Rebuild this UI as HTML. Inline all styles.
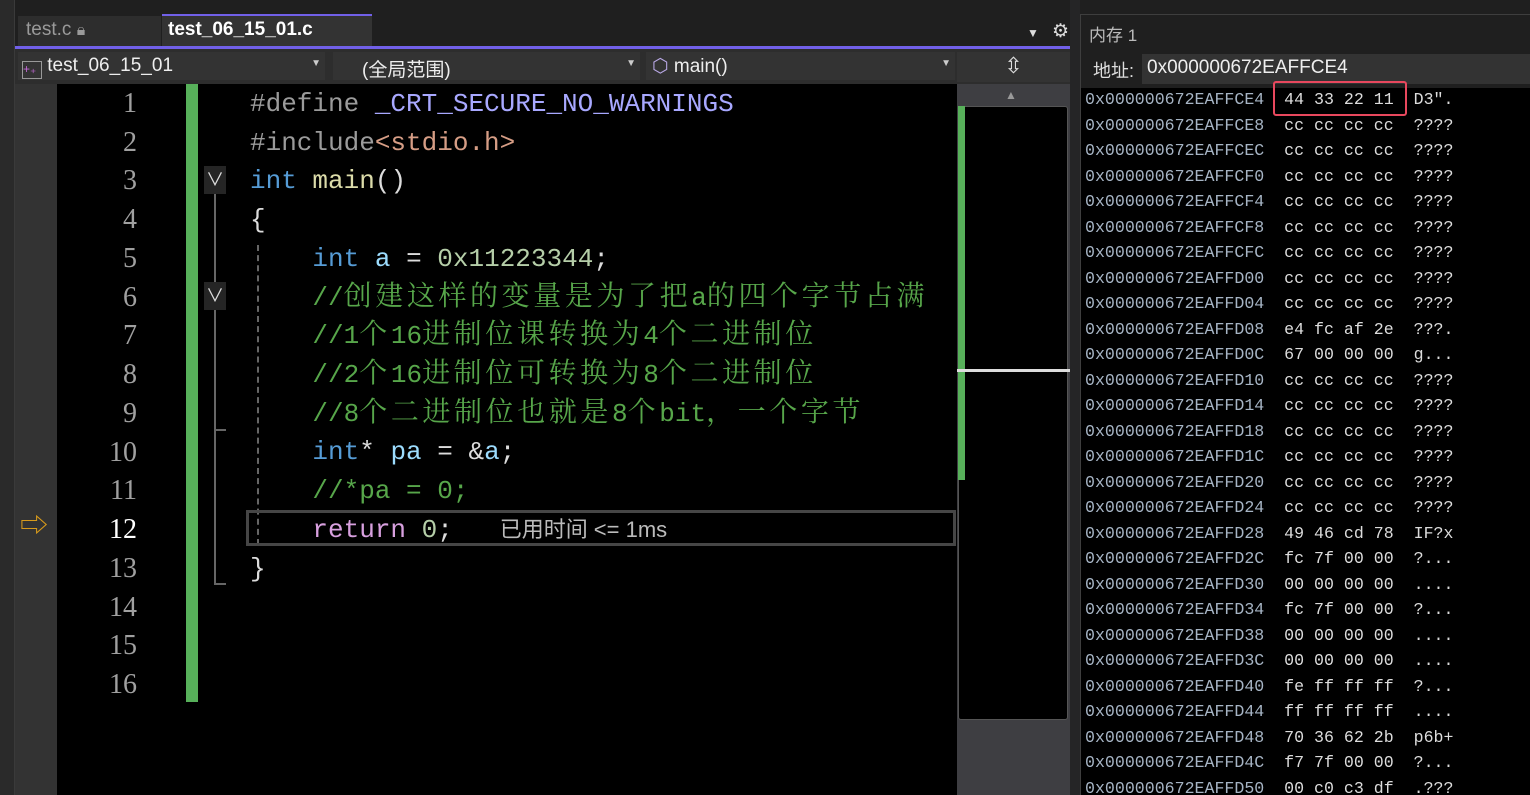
<!DOCTYPE html>
<html><head><meta charset="utf-8"><style>
*{margin:0;padding:0;box-sizing:border-box}
html,body{overflow:hidden}
body{width:1530px;height:795px;background:#1f1f1f;position:relative;overflow:hidden;font-family:"Liberation Sans","Noto Sans CJK SC",sans-serif}
.a{position:absolute}
.code{font-family:"Liberation Mono","Noto Serif CJK SC",monospace;font-size:26px;white-space:normal}
.code div{height:38.73px;line-height:38.73px;white-space:pre}
.c{font-family:"Noto Serif CJK SC",serif;font-size:28px;letter-spacing:3.6px;line-height:20px}
.ln{font-family:"Liberation Serif",serif;font-size:28px;color:#a0a0a0;text-align:right;width:80px;line-height:38.73px}
.mem{font-family:"Liberation Mono",monospace;font-size:16.6px;line-height:25.5px;white-space:pre;color:#dcdcdc}
.mem b{font-weight:normal;color:#a6b4c4}
.kw{color:#569cd6}.fn{color:#dcdcaa}.cm{color:#57a64a}.num{color:#b5cea8}.pp{color:#9b9b9b}.mac{color:#a8a8ff}.var{color:#9cdcfe}.str{color:#d69d85}.ret{color:#d8a0df}.w{color:#dcdcdc}
</style></head><body>
<div class="a" style="left:0;top:0;width:15px;height:795px;background:#2a2a2a;border-right:1px solid #3a3a3a"></div>
<div class="a" style="left:18px;top:16px;width:143px;height:30px;background:#2d2d2d;color:#9a9a9a;font-size:19px;padding:3px 8px">test.c <span style="font-size:16px">🔒︎</span></div>
<div class="a" style="left:162px;top:14px;width:210px;height:32px;background:#333;border-top:2px solid #7160e8;color:#fff;font-weight:bold;font-size:19px;padding:3px 6px">test_06_15_01.c <span style="font-weight:normal;color:#ccc;font-size:15px;margin-left:8px">⊣</span><span style="font-weight:normal;color:#ddd;margin-left:10px;font-size:22px">✕</span></div>
<div class="a" style="left:15px;top:46px;width:1055px;height:3px;background:#7160e8"></div>
<div class="a" style="left:1027px;top:26px;color:#ddd;font-size:12px">▼</div>
<div class="a" style="left:1052px;top:20px;color:#ddd;font-size:19px">⚙</div>
<div class="a" style="left:15px;top:49px;width:1055px;height:35px;background:#2d2d2d"></div>
<div class="a" style="left:18px;top:52px;width:307px;height:28px;background:#333;color:#eee;font-size:19px;padding:3px 4px"><span style="display:inline-block;width:20px;height:18px;border:1px solid #999;color:#c56ad9;font-size:12px;vertical-align:-2px;line-height:14px">+₊</span> test_06_15_01<span style="position:absolute;right:4px;top:6px;font-size:10px;color:#ccc">▼</span></div>
<div class="a" style="left:333px;top:52px;width:307px;height:28px;background:#333;color:#eee;font-size:19px;padding:3px 29px">(全局范围)<span style="position:absolute;right:4px;top:6px;font-size:10px;color:#ccc">▼</span></div>
<div class="a" style="left:646px;top:52px;width:309px;height:28px;background:#333;color:#eee;font-size:19px;padding:3px 6px"><span style="color:#b9a8e6">⬡</span> main()<span style="position:absolute;right:4px;top:6px;font-size:10px;color:#ccc">▼</span></div>
<div class="a" style="left:957px;top:52px;width:113px;height:30px;background:#333;color:#ddd;font-size:22px;text-align:center;line-height:28px">⇳</div>
<div class="a" style="left:15px;top:84px;width:42px;height:711px;background:#333"></div>
<div class="a" style="left:57px;top:84px;width:900px;height:711px;background:#000"></div>
<div class="a" style="left:186px;top:84px;width:12px;height:618px;background:#57b05a"></div>
<div class="a" style="left:20px;top:512px;color:#d89b1c;font-size:28px;line-height:28px">⇨</div>
<div class="a ln" style="left:57px;top:85px">1<br>2<br>3<br>4<br>5<br>6<br>7<br>8<br>9<br>10<br>11<br><span style="color:#fff">12</span><br>13<br>14<br>15<br>16</div>
<div class="a" style="left:204px;top:166px;width:22px;height:28px;background:#252525;color:#ddd;font-size:18px;text-align:center">∨</div>
<div class="a" style="left:204px;top:282px;width:22px;height:28px;background:#252525;color:#ddd;font-size:18px;text-align:center">∨</div>
<div class="a" style="left:214px;top:194px;width:2px;height:88px;background:#666"></div>
<div class="a" style="left:214px;top:310px;width:2px;height:120px;background:#666"></div>
<div class="a" style="left:214px;top:429px;width:12px;height:2px;background:#666"></div>
<div class="a" style="left:214px;top:431px;width:2px;height:153px;background:#666"></div>
<div class="a" style="left:214px;top:583px;width:12px;height:2px;background:#666"></div>
<div class="a" style="left:257px;top:245px;width:0;height:300px;border-left:2px dashed #666"></div>
<div class="a" style="left:246px;top:510px;width:710px;height:36px;border:3px solid #464646"></div>
<div class="a code" style="left:250px;top:85px"><div><span class="pp">#define</span> <span class="mac">_CRT_SECURE_NO_WARNINGS</span></div><div><span class="pp">#include</span><span class="str">&lt;stdio.h&gt;</span></div><div><span class="kw">int</span> <span class="fn">main</span><span class="w">()</span></div><div><span class="w">{</span></div><div>    <span class="kw">int</span> <span class="var">a</span> <span class="w">=</span> <span class="num">0x11223344</span><span class="w">;</span></div><div>    <span class="cm">//<span class="c">创建这样的变量是为了把</span>a<span class="c">的四个字节占满</span></span></div><div>    <span class="cm">//1<span class="c">个</span>16<span class="c">进制位课转换为</span>4<span class="c">个二进制位</span></span></div><div>    <span class="cm">//2<span class="c">个</span>16<span class="c">进制位可转换为</span>8<span class="c">个二进制位</span></span></div><div>    <span class="cm">//8<span class="c">个二进制位也就是</span>8<span class="c">个</span>bit<span class="c">，一个字节</span></span></div><div>    <span class="kw">int</span><span class="w">*</span> <span class="var">pa</span> <span class="w">=</span> <span class="w">&amp;</span><span class="var">a</span><span class="w">;</span></div><div>    <span class="cm">//*pa = 0;</span></div><div>    <span class="ret">return</span> <span class="num">0</span><span class="w">;</span>   <span style="font-family:'Liberation Sans','Noto Sans CJK SC',sans-serif;font-size:22px;color:#bbb">已用时间 &lt;= 1ms</span></div><div><span class="w">}</span></div></div>
<div class="a" style="left:957px;top:84px;width:113px;height:711px;background:#3e3e42"></div>
<div class="a" style="left:1005px;top:88px;color:#999;font-size:12px">▲</div>
<div class="a" style="left:958px;top:106px;width:110px;height:614px;background:#000;border:1px solid #555;border-radius:3px"></div>
<div class="a" style="left:958px;top:106px;width:7px;height:374px;background:#57b05a"></div>
<div class="a" style="left:957px;top:369px;width:113px;height:3px;background:#ddd"></div>
<div class="a" style="left:1070px;top:0;width:10px;height:795px;background:#252526"></div>
<div class="a" style="left:1080px;top:14px;width:450px;height:781px;background:#1f1f1f;border-left:1px solid #3e3e3e;border-top:1px solid #3e3e3e"></div>
<div class="a" style="left:1089px;top:21px;color:#bbb;font-size:17px">内存 1</div>
<div class="a" style="left:1093px;top:57px;color:#ddd;font-size:18px">地址:</div>
<div class="a" style="left:1142px;top:54px;width:388px;height:30px;background:#333;color:#eee;font-size:19px;padding:3px 5px">0x000000672EAFFCE4</div>
<div class="a" style="left:1081px;top:88px;width:449px;height:707px;background:#000"></div>
<div class="a" style="left:1273px;top:81px;width:134px;height:35px;border:2px solid #e8485e;border-radius:3px"></div>
<div class="a mem" style="left:1085px;top:87px"><b>0x000000672EAFFCE4</b>  44 33 22 11  D3″.
<b>0x000000672EAFFCE8</b>  cc cc cc cc  ????
<b>0x000000672EAFFCEC</b>  cc cc cc cc  ????
<b>0x000000672EAFFCF0</b>  cc cc cc cc  ????
<b>0x000000672EAFFCF4</b>  cc cc cc cc  ????
<b>0x000000672EAFFCF8</b>  cc cc cc cc  ????
<b>0x000000672EAFFCFC</b>  cc cc cc cc  ????
<b>0x000000672EAFFD00</b>  cc cc cc cc  ????
<b>0x000000672EAFFD04</b>  cc cc cc cc  ????
<b>0x000000672EAFFD08</b>  e4 fc af 2e  ???.
<b>0x000000672EAFFD0C</b>  67 00 00 00  g...
<b>0x000000672EAFFD10</b>  cc cc cc cc  ????
<b>0x000000672EAFFD14</b>  cc cc cc cc  ????
<b>0x000000672EAFFD18</b>  cc cc cc cc  ????
<b>0x000000672EAFFD1C</b>  cc cc cc cc  ????
<b>0x000000672EAFFD20</b>  cc cc cc cc  ????
<b>0x000000672EAFFD24</b>  cc cc cc cc  ????
<b>0x000000672EAFFD28</b>  49 46 cd 78  IF?x
<b>0x000000672EAFFD2C</b>  fc 7f 00 00  ?...
<b>0x000000672EAFFD30</b>  00 00 00 00  ....
<b>0x000000672EAFFD34</b>  fc 7f 00 00  ?...
<b>0x000000672EAFFD38</b>  00 00 00 00  ....
<b>0x000000672EAFFD3C</b>  00 00 00 00  ....
<b>0x000000672EAFFD40</b>  fe ff ff ff  ?...
<b>0x000000672EAFFD44</b>  ff ff ff ff  ....
<b>0x000000672EAFFD48</b>  70 36 62 2b  p6b+
<b>0x000000672EAFFD4C</b>  f7 7f 00 00  ?...
<b>0x000000672EAFFD50</b>  00 c0 c3 df  .???</div>
</body></html>
